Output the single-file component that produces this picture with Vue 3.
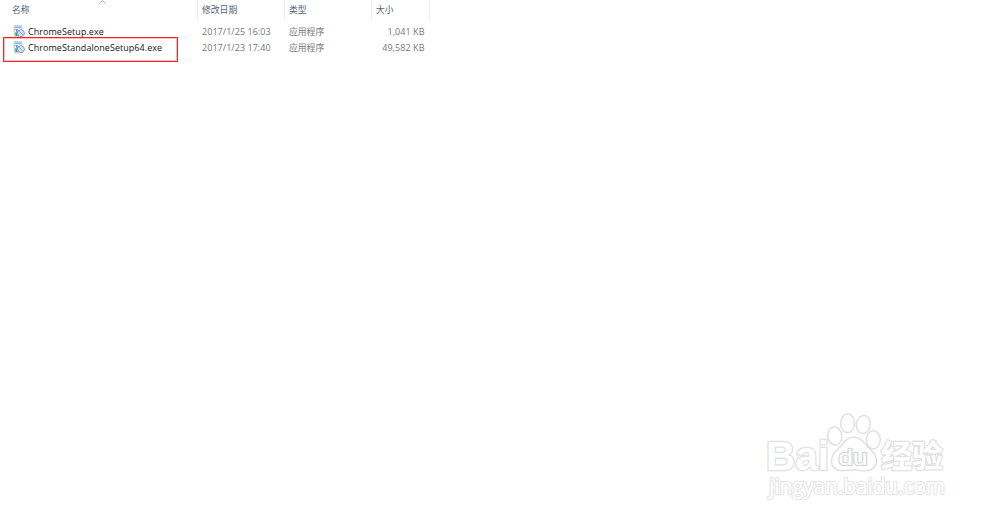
<template>
  <div class="explorer">
    <div class="header">
      <div class="col name">
        名称
        <svg class="sort-icon" width="7" height="4" viewBox="0 0 7 4">
          <path d="M0.5 3.5 L3.5 0.6 L6.5 3.5" />
        </svg>
      </div>
      <div class="col date">修改日期</div>
      <div class="col type">类型</div>
      <div class="col size">大小</div>
    </div>

    <div class="file-list">
      <div class="row" v-for="file in files" :key="file.name">
        <div class="cell name">
          <svg class="file-icon" width="12" height="13" viewBox="0 0 12 13">
            <path d="M1 0.8 H8.5 L9.5 8 H2 Z" fill="#e3f0f8" stroke="#a3bdd0" stroke-width="0.8" />
            <path d="M2.2 2.2 H8" stroke="#7fb8e0" stroke-width="1.4" />
            <path d="M0.8 4.5 H5 L6 11.8 H1.8 Z" fill="#f2f6f8" stroke="#a5b3c0" stroke-width="0.7" />
            <path d="M2 7.5 H4.2 L4.8 11 H2.6 Z" fill="#35a968" />
            <path d="M3.4 4.5 L4.6 8" stroke="#3f7fb8" stroke-width="1.2" />
            <circle cx="8" cy="8.2" r="3.4" fill="#dfe6fa" stroke="#8799dc" stroke-width="1" />
            <path d="M6 6.2 L10 10.2" stroke="#93a4e2" stroke-width="1" />
          </svg>
          <span>{{ file.name }}</span>
        </div>
        <div class="cell date">{{ file.date }}</div>
        <div class="cell type">{{ file.type }}</div>
        <div class="cell size">{{ file.size }}</div>
        <div v-if="file.boxed" class="mark"></div>
      </div>
    </div>

    <svg class="watermark" width="200" height="100" viewBox="760 406 200 100">
      <text class="latin" x="766" y="469.5" font-size="40" textLength="63" lengthAdjust="spacingAndGlyphs">Bai</text>
      <text class="cjk" x="881" y="467" font-size="31" textLength="62" lengthAdjust="spacingAndGlyphs">经验</text>
      <text class="url" x="769" y="493.5" font-size="21" textLength="176" lengthAdjust="spacingAndGlyphs">jingyan.baidu.com</text>
      <g class="paw">
        <ellipse cx="834.8" cy="436" rx="7" ry="9.2" transform="rotate(-8 834.8 436)" />
        <ellipse cx="847.6" cy="423.3" rx="7" ry="9.3" />
        <ellipse cx="863.4" cy="424.5" rx="7" ry="9" transform="rotate(8 863.4 424.5)" />
        <ellipse cx="873.3" cy="439.8" rx="7" ry="9" />
        <path d="M853.5 437.3 C847 437.3 844 442 841.5 445.5 C837.5 450 831.5 453 831.5 461 C831.5 467.5 836.5 471 843 470.8 C848 470.5 850 469.8 854 469.8 C859 469.8 861 471.2 866 470.8 C873 470.3 876.5 466 876.5 460 C876 453 870 450 866 445 C863 441 860 437.3 853.5 437.3 Z" />
      </g>
      <text class="du" x="838.5" y="465" font-size="22" textLength="29" lengthAdjust="spacingAndGlyphs">du</text>
    </svg>
  </div>
</template>

<script setup>
const files = [
  {
    name: 'ChromeSetup.exe',
    date: '2017/1/25 16:03',
    type: '应用程序',
    size: '1,041 KB',
    boxed: false
  },
  {
    name: 'ChromeStandaloneSetup64.exe',
    date: '2017/1/23 17:40',
    type: '应用程序',
    size: '49,582 KB',
    boxed: true
  }
]
</script>

<style>
body {
  margin: 0;
  background: #fff;
}
</style>

<style scoped>
.explorer {
  position: relative;
  width: 1000px;
  height: 521px;
  overflow: hidden;
  background: #fff;
  font-family: "Open Sans", "Noto Sans CJK SC", sans-serif;
  font-size: 9px;
  letter-spacing: 0.05px;
  color: #777;
}

.header {
  display: flex;
  height: 19px;
  color: #53637a;
}

.col {
  position: relative;
  box-sizing: border-box;
  border-right: 1px solid #ebebeb;
  padding-top: 1px;
  line-height: 19px;
  font-size: 8.8px;
  letter-spacing: 0;
  white-space: nowrap;
}

.name {
  width: 198px;
  padding-left: 12px;
}

.date {
  width: 87px;
  padding-left: 4px;
}

.type {
  width: 87px;
  padding-left: 4px;
}

.size {
  width: 58px;
  padding-left: 4px;
}

.sort-icon {
  position: absolute;
  left: 99px;
  top: 0;
  fill: none;
  stroke: #999;
  stroke-width: 0.8;
}

.file-list {
  padding-top: 5px;
}

.row {
  position: relative;
  display: flex;
  height: 16px;
}

.cell {
  box-sizing: border-box;
  line-height: 16px;
  white-space: nowrap;
}

.cell.name {
  display: flex;
  align-items: center;
  padding-left: 13px;
  color: #161616;
}

.file-icon {
  flex: none;
  margin-right: 3px;
  margin-top: -1px;
}

.cell.type {
  font-size: 8.8px;
  letter-spacing: 0;
}

.cell.size {
  padding: 0 5.5px 0 0;
  text-align: right;
}

.mark {
  position: absolute;
  left: 3px;
  top: -3px;
  box-sizing: border-box;
  width: 175px;
  height: 25px;
  border: 1px solid #fa2222;
  box-shadow: inset 0 0 0 1px rgba(255, 40, 40, 0.3);
}

.watermark {
  position: absolute;
  left: 760px;
  top: 406px;
}

.watermark text {
  fill: #fff;
  stroke: #e2e2e2;
  stroke-width: 2.6px;
  stroke-linejoin: round;
  paint-order: stroke;
  letter-spacing: 0;
}

.latin {
  font-family: "Liberation Sans", Arial, sans-serif;
  font-weight: 700;
}

.cjk {
  font-family: "Noto Sans CJK SC", sans-serif;
  font-weight: 700;
}

.watermark .url {
  font-family: "Open Sans", sans-serif;
  font-weight: 400;
  stroke: #e9e9e9;
  stroke-width: 2.6px;
}

.watermark .du {
  font-family: "Liberation Sans", Arial, sans-serif;
  font-weight: 400;
  stroke: #dadada;
  stroke-width: 2.6px;
}

.paw {
  fill: #fff;
  stroke: #e0e0e0;
  stroke-width: 1.5;
}
</style>
